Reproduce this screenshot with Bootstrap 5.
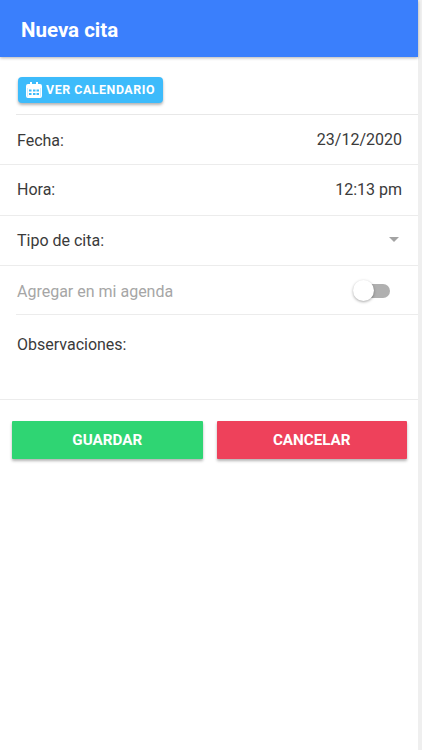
<!DOCTYPE html>
<html lang="es">
<head>
<meta charset="utf-8">
<meta name="viewport" content="width=device-width, initial-scale=1">
<link rel="stylesheet" href="https://cdn.jsdelivr.net/npm/bootstrap@5.3.0/dist/css/bootstrap.min.css">
<style>
html,body{height:100%;margin:0;background:#fff;overflow:hidden}
body{font-family:Roboto,"Liberation Sans",sans-serif;color:#333}
.app-shell{width:418px;height:750px;background:#fff;position:relative}
.page-edge{width:4px;background:#efefef}
.top-bar{height:57px;background:#3a7ffc;box-shadow:0 1px 3px rgba(0,0,0,.3);padding-left:21px;padding-top:3px}
.top-bar h1{font-size:20.5px;font-weight:700;color:#fff;margin:0;line-height:1.2}
.cal-row{height:58px;margin-left:16px;border-bottom:1px solid #e8e8e8;padding-left:2px;padding-top:20px}
.cal-btn{background:#3dbbfb;color:#fff;font-size:12.4px;font-weight:700;letter-spacing:.55px;height:26px;width:145px;padding:0 8px;border:0;border-radius:4px;box-shadow:0 2px 3px rgba(0,0,0,.3);gap:4px}
.form-line{border-bottom:1px solid #ececec;padding-left:17px;padding-right:16px;font-size:16px;color:#3a3a3a}
.h-a{height:50px}.h-b{height:51px}.h-c{height:50px}
.h-d{height:49px;margin-left:16px;padding-left:1px;padding-top:3px}
.h-e{height:85px;padding-top:18px}
.label-low{margin-top:2px}
.muted-line{color:#a6a6a6}
.caret-down{width:0;height:0;border-left:5.5px solid transparent;border-right:5.5px solid transparent;border-top:5.5px solid #a3a3a3;margin-right:3px;margin-top:-2px}
.fake-toggle{width:38px;height:22px;position:relative;margin-right:11px;margin-top:-1px}
.fake-track{position:absolute;left:9px;top:4px;width:28px;height:14px;border-radius:7px;background:#b0b0b0}
.fake-knob{position:absolute;left:0;top:0;width:21px;height:21px;border-radius:50%;background:#fff;box-shadow:0 1px 3px rgba(0,0,0,.35)}
.btn-row{padding:21px 11px 0 12px;gap:14px}
.act{flex:1 1 0;height:38px;border:0;border-radius:1px;color:#fff;font-weight:700;font-size:15.2px;letter-spacing:0;box-shadow:0 2px 3px rgba(0,0,0,.3)}
.act-ok{background:#2fd573}
.act-no{background:#ee415b}
</style>
</head>
<body>
<div class="d-flex">
<div class="app-shell">
  <div class="top-bar d-flex align-items-center"><h1>Nueva cita</h1></div>
  <div class="cal-row">
    <button type="button" class="cal-btn d-inline-flex align-items-center">
      <svg width="16" height="16" viewBox="0 0 16 16" fill="#fff"><path d="M4 0h2v2h4V0h2v2h2a2 2 0 0 1 2 2v10a2 2 0 0 1-2 2H2a2 2 0 0 1-2-2V4a2 2 0 0 1 2-2h2zM1.5 6v8a.5.5 0 0 0 .5.5h12a.5.5 0 0 0 .5-.5V6z"/><path d="M1.5 5h13v10h-13z"/><path d="M3 7.5h2.5v2H3zM7 7.5h2.5v2H7zM10.5 7.5h2.5v2h-2.5zM3 11h2.5v2H3zM7 11h2.5v2H7zM10.5 11h2.5v2h-2.5z" fill="#3dbbfb"/></svg>
      VER CALENDARIO
    </button>
  </div>
  <div class="form-line h-a d-flex justify-content-between align-items-center"><span class="label-low">Fecha:</span><span>23/12/2020</span></div>
  <div class="form-line h-b d-flex justify-content-between align-items-center"><span>Hora:</span><span>12:13 pm</span></div>
  <div class="form-line h-c d-flex justify-content-between align-items-center"><span>Tipo de cita:</span><span class="caret-down"></span></div>
  <div class="form-line h-d d-flex justify-content-between align-items-center muted-line"><span>Agregar en mi agenda</span><span class="fake-toggle"><span class="fake-track"></span><span class="fake-knob"></span></span></div>
  <div class="form-line h-e">Observaciones:</div>
  <div class="btn-row d-flex">
    <button type="button" class="act act-ok">GUARDAR</button>
    <button type="button" class="act act-no">CANCELAR</button>
  </div>
</div>
<div class="page-edge"></div>
</div>
</body>
</html>
